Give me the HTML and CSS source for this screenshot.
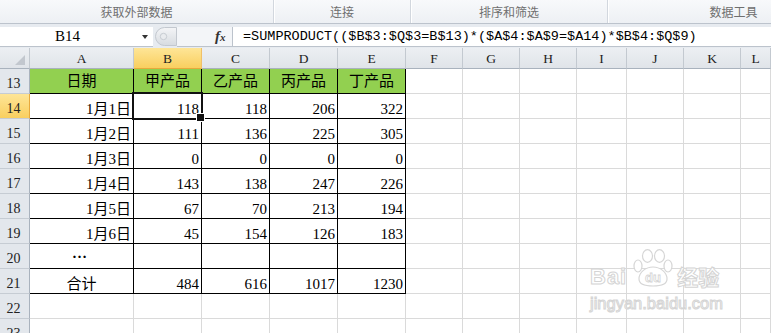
FILE: index.html
```html
<!DOCTYPE html>
<html lang="zh-CN">
  <head>
    <meta charset="utf-8" />
    <title>SUMPRODUCT</title>
    <link rel="stylesheet" href="styles.css">
  </head>

  <body>
    <div class="ribbon">
      <div class="grp">获取外部数据</div>
      <div class="grp">连接</div>
      <div class="grp">排序和筛选</div>
      <div class="grp">数据工具</div>
    </div>

    <div class="fbar">
      <div class="namebox">
        <span class="name">B14</span>
        <span class="caret"></span>
      </div>
      <svg class="grip" width="22" height="19" viewBox="0 0 22 19">
        <defs>
          <linearGradient id="gr" x1="0" y1="0" x2="0" y2="1">
            <stop offset="0" stop-color="#f4f5f7" />
            <stop offset="1" stop-color="#d7dbe0" />
          </linearGradient>
        </defs>
        <path d="M9.5 0.5 H21.5 V18.5 H9.5 A9 9 0 0 1 9.5 0.5 Z" fill="url(#gr)" stroke="#c3c8cf" />
        <circle cx="8.5" cy="9.5" r="3.2" fill="#e9ebee" stroke="#c7ccd2" />
      </svg>
      <div class="fx"><i>f</i><i class="x">x</i></div>
      <div class="formula">=SUMPRODUCT(($B$3:$Q$3=B$13)*($A$4:$A$9=$A14)*$B$4:$Q$9)</div>
    </div>

    <div class="sheet">
      <div class="row head">
        <div class="corner"><span class="tri"></span></div>
        <div>A</div><div class="on">B</div><div>C</div><div>D</div><div>E</div><div>F</div>
        <div>G</div><div>H</div><div>I</div><div>J</div><div>K</div><div>L</div>
      </div>

      <div class="row">
        <div class="rh">13</div>
        <div class="t g">日期</div><div class="t g">甲产品</div><div class="t g">乙产品</div>
        <div class="t g">丙产品</div><div class="t g">丁产品</div>
        <div></div><div></div><div></div><div></div><div></div><div></div><div></div>
      </div>
      <div class="row">
        <div class="rh on">14</div>
        <div class="t">1月1日</div><div class="t act">118</div><div class="t">118</div>
        <div class="t">206</div><div class="t">322</div>
        <div></div><div></div><div></div><div></div><div></div><div></div><div></div>
      </div>
      <div class="row">
        <div class="rh">15</div>
        <div class="t">1月2日</div><div class="t">111</div><div class="t">136</div>
        <div class="t">225</div><div class="t">305</div>
        <div></div><div></div><div></div><div></div><div></div><div></div><div></div>
      </div>
      <div class="row">
        <div class="rh">16</div>
        <div class="t">1月3日</div><div class="t">0</div><div class="t">0</div>
        <div class="t">0</div><div class="t">0</div>
        <div></div><div></div><div></div><div></div><div></div><div></div><div></div>
      </div>
      <div class="row">
        <div class="rh">17</div>
        <div class="t">1月4日</div><div class="t">143</div><div class="t">138</div>
        <div class="t">247</div><div class="t">226</div>
        <div></div><div></div><div></div><div></div><div></div><div></div><div></div>
      </div>
      <div class="row">
        <div class="rh">18</div>
        <div class="t">1月5日</div><div class="t">67</div><div class="t">70</div>
        <div class="t">213</div><div class="t">194</div>
        <div></div><div></div><div></div><div></div><div></div><div></div><div></div>
      </div>
      <div class="row">
        <div class="rh">19</div>
        <div class="t">1月6日</div><div class="t">45</div><div class="t">154</div>
        <div class="t">126</div><div class="t">183</div>
        <div></div><div></div><div></div><div></div><div></div><div></div><div></div>
      </div>
      <div class="row">
        <div class="rh">20</div>
        <div class="t mid dots">…</div><div class="t"></div><div class="t"></div>
        <div class="t"></div><div class="t"></div>
        <div></div><div></div><div></div><div></div><div></div><div></div><div></div>
      </div>
      <div class="row">
        <div class="rh">21</div>
        <div class="t mid">合计</div><div class="t">484</div><div class="t">616</div>
        <div class="t">1017</div><div class="t">1230</div>
        <div></div><div></div><div></div><div></div><div></div><div></div><div></div>
      </div>
      <div class="row">
        <div class="rh">22</div>
        <div></div><div></div><div></div><div></div><div></div>
        <div></div><div></div><div></div><div></div><div></div><div></div><div></div>
      </div>
      <div class="row">
        <div class="rh">23</div>
        <div></div><div></div><div></div><div></div><div></div>
        <div></div><div></div><div></div><div></div><div></div><div></div><div></div>
      </div>

      <!-- baidu jingyan watermark -->
      <div class="wm">
        <div class="wm-top">
          <span class="wm-bai">Bai</span>
          <svg class="paw" width="42" height="38" viewBox="0 0 42 38">
            <g fill="#fff" stroke="#d6d6d6" stroke-width="1.2">
              <ellipse cx="7" cy="17" rx="4" ry="6" />
              <ellipse cx="16.5" cy="7" rx="5" ry="6.3" />
              <ellipse cx="28.5" cy="7" rx="5" ry="6.3" />
              <ellipse cx="37" cy="17" rx="4" ry="6" />
              <path d="M8 30 C8 23 15 18 22 18 C29 18 36 23 36 30 C36 35 31 37 22 37 C13 37 8 35 8 30 Z" />
            </g>
            <text x="22" y="33" text-anchor="middle" class="paw-du">du</text>
          </svg>
          <span class="wm-cn">经验</span>
        </div>
        <div class="wm-url">jingyan.baidu.com</div>
      </div>
    </div>
  </body>
</html>
```

FILE: styles.css
```css
* {
  box-sizing: border-box;
}
html,
body {
  margin: 0;
  background: white;
}
body {
  width: 771px;
  height: 333px;
  overflow: hidden;
  font-family: "Liberation Serif", "Noto Sans CJK SC", serif;
  color: #000;
}

/* ribbon group captions */
.ribbon {
  display: grid;
  grid-template-columns: 274px 137px 197px 252px;
  height: 24px;
  overflow: hidden;
  background: linear-gradient(#f8f9fb, #edf0f4);
  border-bottom: 1px solid #bcc3cc;
}
.grp {
  border-right: 1px solid #d2d7de;
  box-shadow: 1px 0 0 #fff;
  text-align: center;
  font: 12px/23px "Noto Sans CJK SC", sans-serif;
  color: #6f6f6f;
}

/* formula bar */
.fbar {
  display: flex;
  height: 24px;
  padding-top: 3px;
  background: #e7ebf0;
}
.namebox {
  display: flex;
  align-items: center;
  width: 153px;
  height: 20px;
  background: white;
  border-bottom: 1px solid #bcc3cc;
}
.name {
  width: 135px;
  text-align: center;
  font-size: 15px;
}
.caret {
  width: 0;
  height: 0;
  border-left: 3.5px solid transparent;
  border-right: 3.5px solid transparent;
  border-top: 4px solid #333;
  margin-left: 7px;
}
.grip {
  margin-left: 2px;
}
.fx {
  width: 55px;
  height: 20px;
  padding-left: 38px;
  font: bold italic 15px/19px "Liberation Serif", serif;
  color: #333;
  background: #f3f5f8;
  border-bottom: 1px solid #bcc3cc;
}
.fx .x {
  font-size: 11px;
}
.formula {
  flex: 1;
  height: 20px;
  padding-left: 10px;
  background: white;
  border-left: 1px solid #bcc3cc;
  border-bottom: 1px solid #bcc3cc;
  font-family: "Liberation Mono", monospace;
  font-size: 13.5px;
  line-height: 19px;
  white-space: nowrap;
}

/* sheet grid */
.sheet {
  position: relative;
  height: 285px;
  overflow: hidden;
}
.row {
  display: grid;
  grid-template-columns: 30px 104px 68px 68px 68px 68px 57px 57px 57px 50px 57px 57px 1fr;
  height: 25px;
}
.row > div {
  border-right: 1px solid #dadada;
  border-bottom: 1px solid #dadada;
}
.row.head {
  height: 21px;
}
.row.head > div {
  display: flex;
  align-items: center;
  justify-content: center;
  padding-top: 2px;
  font-size: 13.5px;
  color: #222;
  background: linear-gradient(#eceff3, #e0e4e9);
  border-right-color: #c3c9d0;
  border-bottom-color: #a9b2bd;
}
.row.head > div.on {
  background: linear-gradient(#fee597, #f9cf5f);
  border-bottom-color: #e8a93c;
  border-right-color: #f0c068;
}
.row.head > .corner {
  align-items: flex-end;
  justify-content: flex-end;
  padding: 0 4px 3px 0;
}
.tri {
  width: 0;
  height: 0;
  border-left: 10px solid transparent;
  border-bottom: 10px solid #c2c7ce;
}
.row > .rh {
  display: flex;
  align-items: flex-end;
  justify-content: center;
  padding: 0 2px 1px 0;
  font-size: 14px;
  line-height: 16px;
  color: #222;
  background: #e3e7ec;
  border-right-color: #a9b2bd;
  border-bottom-color: #c6ccd3;
}
.row > .rh.on {
  background: linear-gradient(#fee597, #f9cf5f);
  border-right-color: #e8a93c;
}

/* table cells A13:E21 */
.row > .t {
  display: flex;
  align-items: flex-end;
  justify-content: flex-end;
  padding: 0 2px 0 0;
  font-size: 15px;
  line-height: 17px;
  border-right-color: #000;
  border-bottom-color: #000;
}
.row > .g {
  align-items: center;
  justify-content: center;
  padding: 0;
  background: #92d050;
}
.row > .mid {
  justify-content: center;
  padding: 0;
}
.row > .dots {
  padding: 0 4px 6px 0;
  font-weight: bold;
}
.row > .act {
  position: relative;
}
.act::after {
  content: "";
  position: absolute;
  top: -2px;
  left: -2px;
  right: -2px;
  bottom: -2px;
  border: 2px solid #111;
}
.act::before {
  content: "";
  position: absolute;
  right: -4px;
  bottom: -4px;
  width: 7px;
  height: 7px;
  background: #111;
  border: 1px solid #fff;
  z-index: 1;
}

/* watermark */
.wm {
  position: absolute;
  left: 590px;
  top: 201px;
  color: #fff;
  -webkit-text-stroke: 1px #d4d4d4;
}
.wm-top {
  display: flex;
  align-items: flex-end;
}
.wm-bai {
  font: bold 22px/22px "Liberation Sans", sans-serif;
  letter-spacing: 1px;
  margin-right: 4px;
  margin-bottom: -1px;
}
.paw-du {
  font: bold 13px "Liberation Sans", sans-serif;
  fill: #fff;
  stroke: #d4d4d4;
  stroke-width: 0.8px;
}
.wm-cn {
  font: bold 21px/22px "Noto Sans CJK SC", sans-serif;
  margin-left: 4px;
}
.wm-url {
  margin-top: 8px;
  font: 16.5px/16px "Liberation Sans", sans-serif;
}
```
